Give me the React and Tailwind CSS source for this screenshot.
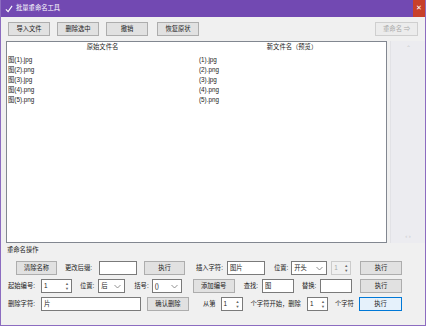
import React from "react";

const F = { fontFamily: '"Liberation Sans", "Noto Sans CJK SC", sans-serif' };

function Btn({ children, w = 42, cls = "", disabled = false, primary = false }) {
  return (
    <div
      className={`flex items-center justify-center h-[14px] text-[6.3px] leading-none border whitespace-nowrap overflow-hidden ${
        primary
          ? "bg-[#e5f1fb] border-[#0078d7] text-[#222]"
          : disabled
          ? "bg-[#ececec] border-[#cfcfcf] text-[#a8a8a8]"
          : "bg-[#e1e1e1] border-[#adadad] text-[#222]"
      } ${cls}`}
      style={{ width: w }}
    >
      {children}
    </div>
  );
}

function Lbl({ children, cls = "" }) {
  return <div className={`text-[6.3px] leading-none text-[#222] whitespace-nowrap ${cls}`}>{children}</div>;
}

function Inp({ children, w, cls = "" }) {
  return (
    <div
      className={`h-[14px] bg-white border border-[#7a7a7a] text-[6.3px] leading-[12px] pl-[2px] text-[#222] ${cls}`}
      style={{ width: w }}
    >
      {children}
    </div>
  );
}

function Spin({ children, w, cls = "", disabled = false }) {
  return (
    <div
      className={`h-[14px] flex border ${disabled ? "border-[#cccccc] bg-[#f0f0f0] text-[#a8a8a8]" : "border-[#7a7a7a] bg-white text-[#222]"} ${cls}`}
      style={{ width: w }}
    >
      <div className="flex-1 text-[6.3px] leading-[12px] pl-[2px]">{children}</div>
      <div className="w-[8px] flex flex-col items-center justify-center text-[4px] leading-[5px] text-[#666]">
        <span>▲</span>
        <span>▼</span>
      </div>
    </div>
  );
}

function Sel({ children, w, cls = "" }) {
  return (
    <div
      className={`h-[14px] flex items-center bg-white border border-[#7a7a7a] text-[6.3px] leading-none text-[#222] pl-[2px] ${cls}`}
      style={{ width: w }}
    >
      <div className="flex-1">{children}</div>
      <svg width="7" height="5" viewBox="0 0 7 5" className="mr-[3px]">
        <path d="M0.5 1 L3.5 4 L6.5 1" fill="none" stroke="#777" strokeWidth="0.8" />
      </svg>
    </div>
  );
}

export default function App() {
  const rows = [
    ["图(1).jpg", "(1).jpg"],
    ["图(2).png", "(2).png"],
    ["图(3).jpg", "(3).jpg"],
    ["图(4).png", "(4).png"],
    ["图(5).png", "(5).png"],
  ];
  return (
    <div style={F} className="w-[426px] h-[326px] bg-[#f0f0f0] flex flex-col border-l border-r border-b border-[#8c6cc0] overflow-hidden">
      <div className="h-[17px] shrink-0 bg-[#7249b2] flex items-center">
        <svg width="8" height="8" viewBox="0 0 9 9" className="ml-[4px]">
          <path d="M1 5 L3.5 7.5 L8 1" fill="none" stroke="#fff" strokeWidth="1.2" />
        </svg>
        <div className="ml-[3px] text-[6.3px] leading-none text-white">批量重命名工具</div>
        <div className="ml-auto w-[12px] h-[17px] bg-[#c8402a] flex items-center justify-center text-white text-[7px]">✕</div>
      </div>

      <div className="flex items-center mt-[5px] pl-[7px] pr-[7px]">
        <Btn w={42}>导入文件</Btn>
        <Btn w={42} cls="ml-[7px]">删除选中</Btn>
        <Btn w={42} cls="ml-[7px]">撤销</Btn>
        <Btn w={42} cls="ml-[9px]">恢复原状</Btn>
        <Btn w={43} cls="ml-auto" disabled>
          重命名 ⇒
        </Btn>
      </div>

      <div className="flex mt-[5px]">
        <div className="ml-[5px] w-[381px] h-[202px] bg-white border border-[#828790] flex">
          <div className="w-[191px] flex flex-col">
            <div className="h-[11px] flex items-center justify-center text-[6.3px] leading-none text-[#222]">原始文件名</div>
            <div className="mt-[2px] flex flex-col pl-[1px]">
              {rows.map((r) => (
                <div key={r[0]} className="h-[10px] text-[6.3px] leading-[10px] text-[#222]">{r[0]}</div>
              ))}
            </div>
          </div>
          <div className="flex-1 flex flex-col">
            <div className="h-[11px] flex items-center justify-center text-[6.3px] leading-none text-[#222]">新文件名（预览）</div>
            <div className="mt-[2px] flex flex-col pl-[1px]">
              {rows.map((r) => (
                <div key={r[1]} className="h-[10px] text-[6.3px] leading-[10px] text-[#222]">{r[1]}</div>
              ))}
            </div>
          </div>
        </div>
        <div className="flex-1 flex">
          <div className="w-[1px] h-[202px] bg-[#e2e2e6] ml-[3px]" />
          <div className="flex-1 flex flex-col items-center justify-between py-[4px] text-[6px] leading-none text-[#c8c8cc] bg-[#ececf0]">
            <span>⌃</span>
            <span>‹ ›</span>
          </div>
        </div>
      </div>

      <Lbl cls="mt-[4px] ml-[6px]">重命名操作</Lbl>

      <div className="flex items-center mt-[8px] pr-[23px]">
        <Btn w={41} cls="ml-[15px]">清除名称</Btn>
        <Lbl cls="ml-[8px]">更改后缀:</Lbl>
        <Inp w={38} cls="ml-[7px]"></Inp>
        <Btn w={41} cls="ml-[7px]">执行</Btn>
        <Lbl cls="ml-[11px]">插入字符:</Lbl>
        <Inp w={38} cls="ml-[4px]">图片</Inp>
        <Lbl cls="ml-[9px]">位置:</Lbl>
        <Sel w={36} cls="ml-[3px]">开头</Sel>
        <Spin w={20} cls="ml-[4px]" disabled>1</Spin>
        <Btn w={42} cls="ml-auto">执行</Btn>
      </div>

      <div className="flex items-center mt-[4px] pr-[23px]">
        <Lbl cls="ml-[7px]">起始编号:</Lbl>
        <Spin w={31} cls="ml-[6px]">1</Spin>
        <Lbl cls="ml-[8px]">位置:</Lbl>
        <Sel w={27} cls="ml-[4px]">后</Sel>
        <Lbl cls="ml-[9px]">括号:</Lbl>
        <Sel w={30} cls="ml-[3px]">()</Sel>
        <Btn w={42} cls="ml-[11px]">添加编号</Btn>
        <Lbl cls="ml-[9px]">查找:</Lbl>
        <Inp w={32} cls="ml-[4px]">图</Inp>
        <Lbl cls="ml-[8px]">替换:</Lbl>
        <Inp w={32} cls="ml-[4px]"></Inp>
        <Btn w={42} cls="ml-auto">执行</Btn>
      </div>

      <div className="flex items-center mt-[4px] pr-[23px]">
        <Lbl cls="ml-[7px]">删除字符:</Lbl>
        <Inp w={100} cls="ml-[6px]">片</Inp>
        <Btn w={42} cls="ml-[6px]">确认删除</Btn>
        <Lbl cls="ml-[14px]">从第</Lbl>
        <Spin w={22} cls="ml-[5px]">1</Spin>
        <Lbl cls="ml-[8px]">个字符开始，删除</Lbl>
        <Spin w={21} cls="ml-[6px]">1</Spin>
        <Lbl cls="ml-[7px]">个字符</Lbl>
        <Btn w={43} cls="ml-auto" primary>执行</Btn>
      </div>
    </div>
  );
}
